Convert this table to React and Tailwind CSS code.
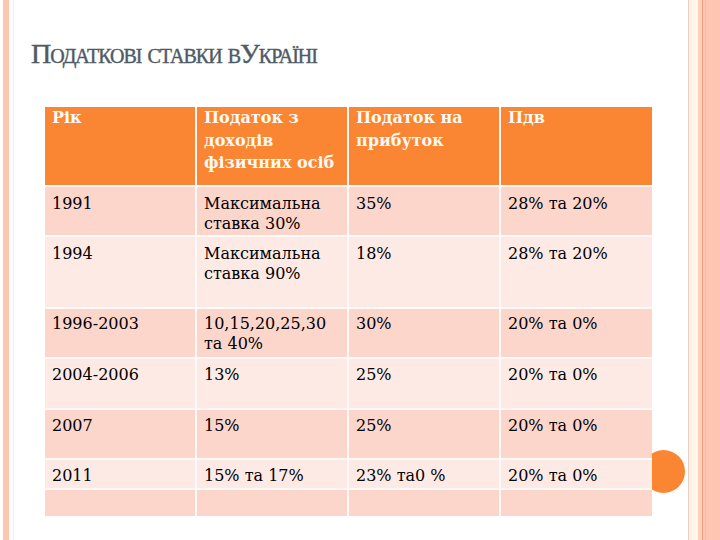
import React from "react";

const rows = [
  { h: "h-[48px]", pt: "pt-[7px]", bg: "bg-[#fcd5cb]", c: ["1991", "Максимальна ставка 30%", "35%", "28% та 20%"] },
  { h: "h-[70px]", pt: "pt-[7px]", bg: "bg-[#fdeae5]", c: ["1994", "Максимальна ставка 90%", "18%", "28% та 20%"] },
  { h: "h-[48px]", pt: "pt-[5px]", bg: "bg-[#fcd5cb]", c: ["1996-2003", "10,15,20,25,30 та 40%", "30%", "20% та 0%"] },
  { h: "h-[49px]", pt: "pt-[6px]", bg: "bg-[#fdeae5]", c: ["2004-2006", "13%", "25%", "20% та 0%"] },
  { h: "h-[48px]", pt: "pt-[6px]", bg: "bg-[#fcd5cb]", c: ["2007", "15%", "25%", "20% та 0%"] },
  { h: "h-[28px]", pt: "pt-[6px]", bg: "bg-[#fdeae5]", c: ["2011", "15% та 17%", "23% та0 %", "20% та 0%"] },
  { h: "h-[26px]", pt: "pt-[6px]", bg: "bg-[#fcd5cb]", c: ["", "", "", ""] },
];

const headers = ["Рік", "Податок з доходів фізичних осіб", "Податок на прибуток", "Пдв"];

export default function App() {
  return (
    <div className="w-[720px] h-[540px] bg-white flex overflow-hidden">
      {/* left decorative stripe */}
      <div className="w-[3px] h-full bg-white" />
      <div className="w-[6px] h-full bg-[#fdc6b1]" />
      <div className="w-[4px] h-full bg-white" />
      <div className="w-[1px] h-full bg-[#fcebe3]" />
      {/* content */}
      <div className="relative flex-1 h-full flex flex-col">
        <h1
          className="mt-[37px] ml-[17px] text-[28px] leading-[34px] tracking-[-1px] text-[#4f5a64] [font-variant:small-caps] [-webkit-text-stroke:0.4px_#4f5a64]"
          style={{ fontFamily: '"Liberation Serif", serif' }}
        >
          Податкові ставки вУкраїні
        </h1>
        <div className="absolute left-[628px] top-[450px] w-[43px] h-[43px] rounded-full bg-[#fa8634]" />
        <div
          className="relative mt-[36px] ml-[31px] w-[607px] grid grid-cols-[150px_150px_150px_151px] gap-[2px] bg-[#fffaf7] text-[16px]"
          style={{ fontFamily: '"DejaVu Serif", serif' }}
        >
          {headers.map((t, i) => (
            <div
              key={i}
              className="h-[78px] bg-[#fa8634] text-[#fffaf3] font-bold leading-[22.5px] pl-[7px] pr-[2px]"
            >
              {t}
            </div>
          ))}
          {rows.map((r, ri) =>
            r.c.map((t, ci) => (
              <div
                key={ri + "-" + ci}
                className={`${r.h} ${r.pt} ${r.bg} text-black leading-[20px] pl-[7px] pr-[2px] overflow-hidden`}
              >
                {t}
              </div>
            ))
          )}
        </div>
      </div>
      {/* right decorative stripes */}
      <div className="w-[1px] h-full bg-[#ead0c2]" />
      <div className="w-[3px] h-full bg-[#fbeee6]" />
      <div className="w-[6px] h-full bg-[#fff6ea]" />
      <div className="w-[4px] h-full bg-[#fcd0bf]" />
      <div className="w-[1px] h-full bg-[#f39a7c]" />
      <div className="w-[2px] h-full bg-[#fdc7b3]" />
      <div className="w-[1px] h-full bg-[#f9b9a2]" />
      <div className="w-[14px] h-full bg-[#fec6b2]" />
    </div>
  );
}
